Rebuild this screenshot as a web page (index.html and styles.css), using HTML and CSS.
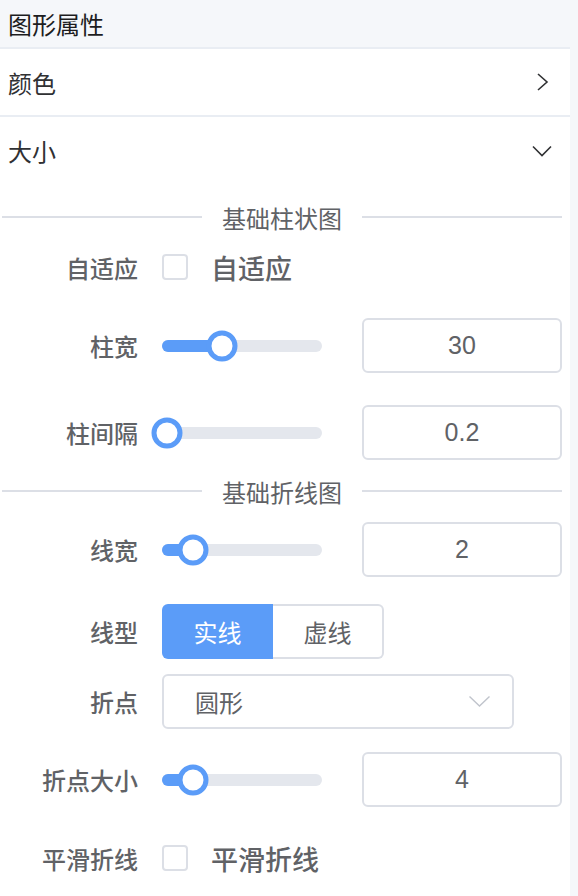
FILE: index.html
```html
<!DOCTYPE html>
<html lang="zh-CN">
<head>
<meta charset="utf-8">
<title>图形属性</title>
<link rel="stylesheet" href="styles.css">
</head>
<body>
<div class="header">图形属性</div>
<div class="panel">
  <div class="collapse-row row-color">
    <span>颜色</span>
    <svg class="chev" width="20" height="20" viewBox="0 0 20 20"><path d="M6 2 L15 10 L6 18" fill="none" stroke="#303133" stroke-width="1.6"/></svg>
  </div>
  <div class="collapse-row row-size">
    <span>大小</span>
    <svg class="chev" width="20" height="20" viewBox="0 0 20 20"><path d="M1 5.5 L10 14.5 L19 5.5" fill="none" stroke="#303133" stroke-width="1.6"/></svg>
  </div>
  <div class="form">
    <div class="divider divider-first"><span>基础柱状图</span></div>
    <div class="item item-check">
      <div class="label">自适应</div>
      <div class="checkbox"></div>
      <div class="checkbox-text">自适应</div>
    </div>
    <div class="item item-field mt-34">
      <div class="label">柱宽</div>
      <div class="slider">
        <div class="slider-fill" style="width:60px"></div>
        <div class="slider-thumb" style="left:60px"></div>
      </div>
      <div class="number">30</div>
    </div>
    <div class="item item-field mt-32">
      <div class="label">柱间隔</div>
      <div class="slider">
        <div class="slider-fill" style="width:5px"></div>
        <div class="slider-thumb" style="left:5px"></div>
      </div>
      <div class="number">0.2</div>
    </div>
    <div class="divider divider-second"><span>基础折线图</span></div>
    <div class="item item-field">
      <div class="label">线宽</div>
      <div class="slider">
        <div class="slider-fill" style="width:31px"></div>
        <div class="slider-thumb" style="left:31px"></div>
      </div>
      <div class="number">2</div>
    </div>
    <div class="item item-field mt-27">
      <div class="label">线型</div>
      <div class="seg">
        <div class="seg-btn seg-active">实线</div>
        <div class="seg-btn seg-plain">虚线</div>
      </div>
    </div>
    <div class="item item-field mt-15">
      <div class="label">折点</div>
      <div class="select">
        <span>圆形</span>
        <svg width="21" height="11" viewBox="0 0 21 11"><path d="M0.5 0.5 L10.5 10 L20.5 0.5" fill="none" stroke="#c0c4cc" stroke-width="1.4"/></svg>
      </div>
    </div>
    <div class="item item-field mt-23">
      <div class="label">折点大小</div>
      <div class="slider">
        <div class="slider-fill" style="width:31px"></div>
        <div class="slider-thumb" style="left:31px"></div>
      </div>
      <div class="number">4</div>
    </div>
    <div class="item item-check mt-34">
      <div class="label">平滑折线</div>
      <div class="checkbox"></div>
      <div class="checkbox-text">平滑折线</div>
    </div>
  </div>
</div>
</body>
</html>
```
FILE: styles.css
```css
html, body {
  margin: 0;
  padding: 0;
}
body {
  width: 578px;
  height: 896px;
  overflow: hidden;
  background: #f5f7fa;
  font-family: "Liberation Sans", "Noto Sans CJK SC", sans-serif;
}
.header {
  height: 47px;
  box-sizing: border-box;
  padding: 8px 8px 3px;
  font-size: 24px;
  line-height: 36px;
  color: #1d1d1f;
}
.panel {
  width: 570px;
  min-height: 847px;
  background: #fff;
  border-top: 2px solid #e9edf3;
}
.collapse-row {
  display: flex;
  align-items: center;
  justify-content: space-between;
  padding: 0 18px 0 8px;
  font-size: 24px;
  color: #303133;
}
.row-color {
  height: 66px;
  border-bottom: 2px solid #e9edf3;
}
.row-size {
  height: 67px;
}
.chev {
  display: block;
}
.divider {
  display: flex;
  align-items: center;
  width: 560px;
  margin-left: 2px;
  font-size: 24px;
  color: #606266;
}
.divider::before,
.divider::after {
  content: "";
  flex: 1;
  height: 2px;
  background: #dcdfe6;
}
.divider span {
  padding: 0 20px;
}
.divider-first {
  height: 66px;
}
.divider-second {
  height: 62px;
}
.item {
  display: flex;
  align-items: center;
}
.item-check {
  height: 34px;
}
.item-field {
  height: 55px;
}
.mt-34 { margin-top: 34px; }
.mt-32 { margin-top: 32px; }
.mt-27 { margin-top: 27px; }
.mt-23 { margin-top: 23px; }
.mt-15 { margin-top: 15px; }
.label {
  width: 162px;
  flex-shrink: 0;
  box-sizing: border-box;
  padding-right: 24px;
  text-align: right;
  font-size: 24px;
  font-weight: 500;
  color: #606266;
}
.checkbox {
  width: 26px;
  height: 26px;
  box-sizing: border-box;
  border: 2px solid #dcdfe6;
  border-radius: 4px;
  background: #fff;
}
.checkbox-text {
  margin-left: 23px;
  font-size: 27px;
  font-weight: 500;
  color: #606266;
}
.slider {
  position: relative;
  width: 160px;
  height: 12px;
  border-radius: 6px;
  background: #e4e7ed;
}
.slider-fill {
  height: 100%;
  border-radius: 6px;
  background: #5b9cf8;
}
.slider-thumb {
  position: absolute;
  top: 50%;
  width: 31px;
  height: 31px;
  box-sizing: border-box;
  border: 5px solid #5b9cf8;
  border-radius: 50%;
  background: #fff;
  transform: translate(-50%, -50%);
}
.number {
  margin-left: 40px;
  width: 200px;
  height: 55px;
  box-sizing: border-box;
  border: 2px solid #dcdfe6;
  border-radius: 6px;
  display: flex;
  align-items: center;
  justify-content: center;
  font-size: 25px;
  color: #606266;
}
.seg {
  display: flex;
}
.seg-btn {
  width: 111px;
  height: 55px;
  box-sizing: border-box;
  display: flex;
  align-items: center;
  justify-content: center;
  font-size: 24px;
}
.seg-active {
  background: #5b9cf8;
  color: #fff;
  border-radius: 6px 0 0 6px;
}
.seg-plain {
  border: 2px solid #dcdfe6;
  border-left: none;
  border-radius: 0 6px 6px 0;
  color: #606266;
}
.select {
  width: 352px;
  height: 55px;
  box-sizing: border-box;
  border: 2px solid #dcdfe6;
  border-radius: 6px;
  display: flex;
  align-items: center;
  justify-content: space-between;
  padding: 0 22px 0 31px;
  font-size: 24px;
  color: #606266;
}
.select svg {
  display: block;
}
```
